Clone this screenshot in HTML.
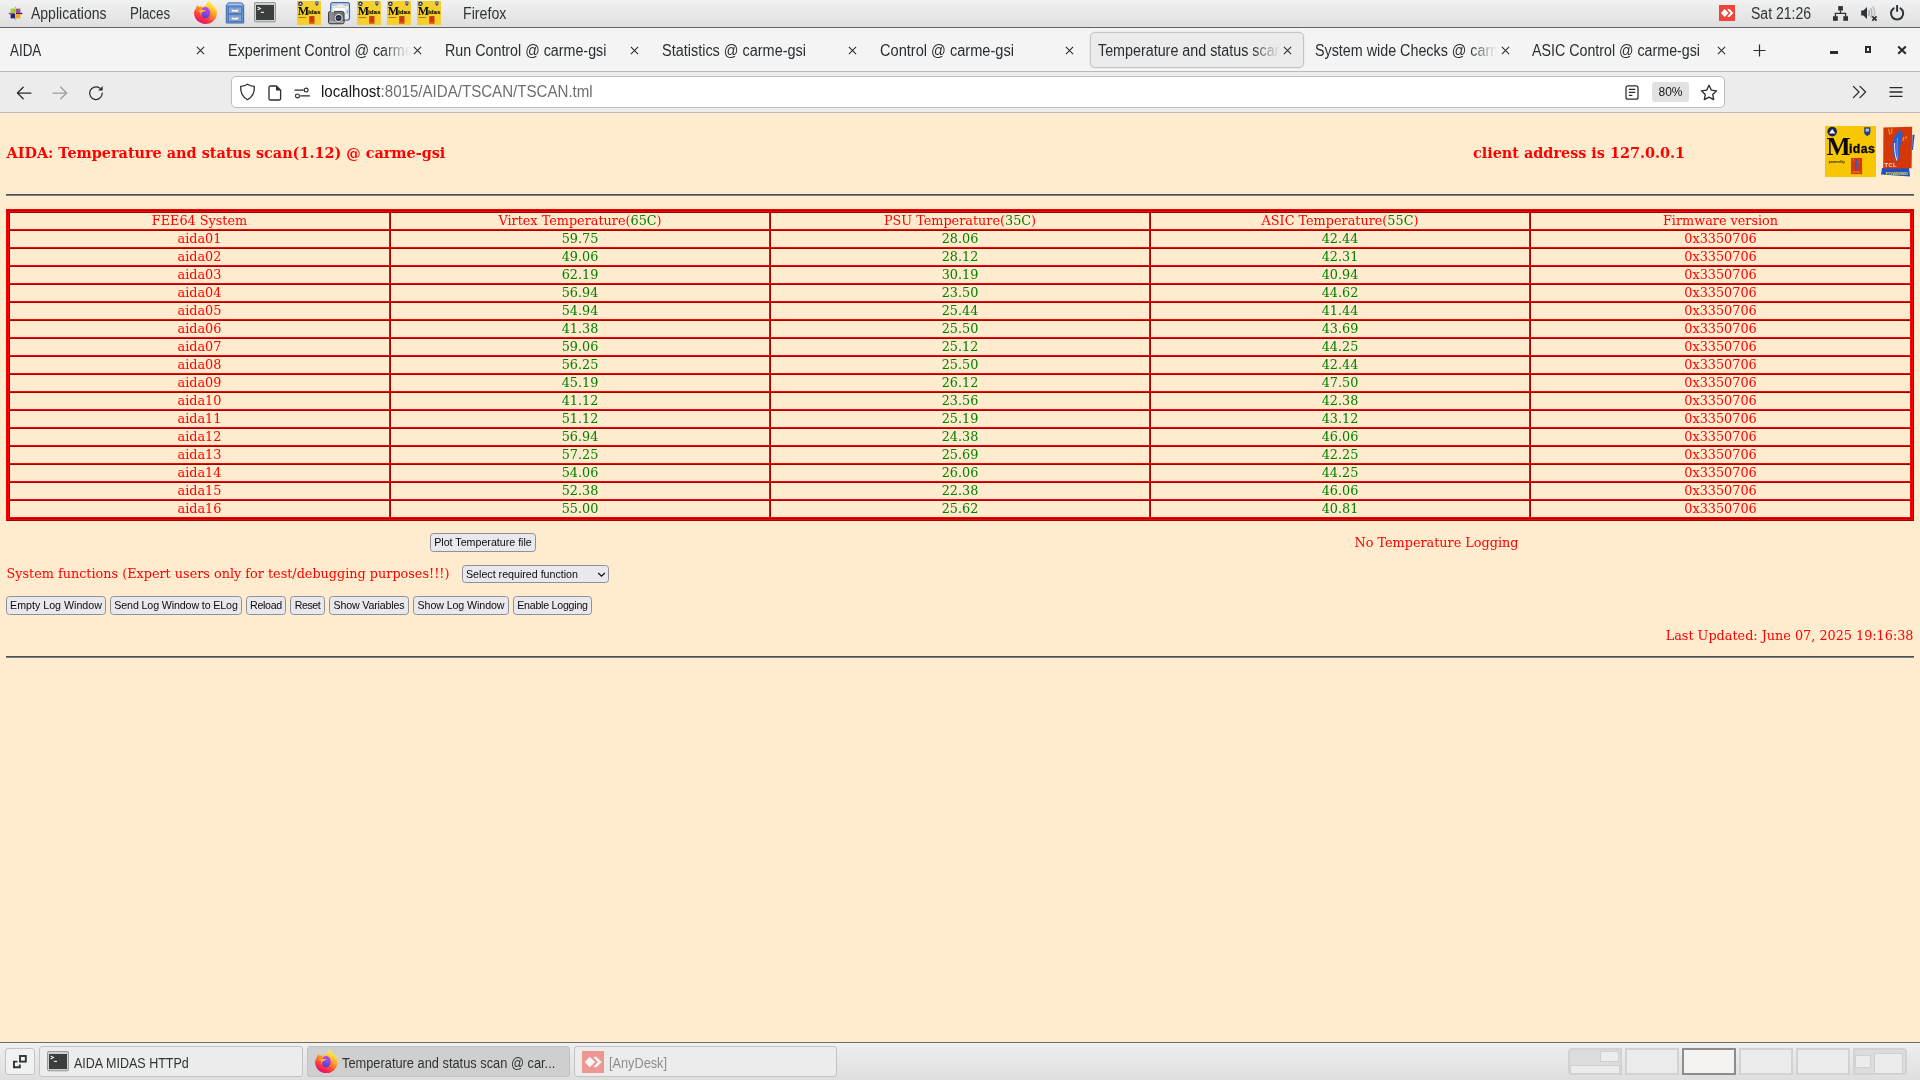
<!DOCTYPE html>
<html>
<head>
<meta charset="utf-8">
<title>Temperature and status scan @ carme-gsi</title>
<style>
html,body{margin:0;padding:0;}
body{width:1920px;height:1080px;position:relative;overflow:hidden;background:#ffebcd;font-family:"Liberation Sans",sans-serif;}
.abs{position:absolute;white-space:nowrap;}
#panel,#tabs,#nav,#page,#task{will-change:transform;}
/* ---------- GNOME top panel ---------- */
#panel{position:absolute;left:0;top:0;width:1920px;height:27px;background:linear-gradient(#f1f1f1,#dfdfdf);border-bottom:1px solid #636363;}
#panel .t{position:absolute;top:0;height:27px;line-height:28px;font-size:15.8px;color:#2e3436;white-space:nowrap;transform-origin:0 50%;}
/* ---------- Firefox tab bar ---------- */
#tabs{position:absolute;left:0;top:28px;width:1920px;height:43px;background:#f4f4f4;border-bottom:1px solid #b9b9b9;}
#tabs .tt{position:absolute;top:1px;height:43px;line-height:43px;font-size:15.8px;color:#2a2e31;white-space:nowrap;overflow:hidden;}
#tabs .tt span{display:inline-block;transform-origin:0 50%;}
#tabs .x{position:absolute;top:17.7px;width:9px;height:9px;}
#tabs .fade{-webkit-mask-image:linear-gradient(90deg,#000 0,#000 154px,transparent 182px);mask-image:linear-gradient(90deg,#000 0,#000 154px,transparent 182px);}
#acttab{position:absolute;left:1089.5px;top:3.5px;width:214px;height:36.5px;border:1px solid #c3c3c8;border-radius:5px;background:#ebebeb;box-sizing:border-box;box-shadow:0 0 2px rgba(0,0,0,.12);}
/* ---------- Firefox nav bar ---------- */
#nav{position:absolute;left:0;top:72px;width:1920px;height:40px;background:#ececec;border-bottom:1px solid #bcbcbc;}
#url{position:absolute;left:231px;top:4px;width:1494px;height:32px;box-sizing:border-box;border:1px solid #bebebe;border-radius:5px;background:#fff;}
/* ---------- page ---------- */
#page{position:absolute;left:0;top:113px;width:1920px;height:918px;background:#ffebcd;font-family:"DejaVu Serif","Liberation Serif",serif;font-size:12.8px;color:#f00;}
.hr{position:absolute;left:6px;width:1908px;height:2px;background:linear-gradient(#4c4d50 50%,#7f8083 50%);}
/* table */
#tA{position:absolute;left:6px;top:96px;width:1908px;height:312px;box-sizing:border-box;border:1px solid;border-color:#f00 #a80000 #a80000 #f00;}
#tB{box-sizing:border-box;width:1906px;height:310px;border:1px solid;border-color:#a80000 #f00 #f00 #a80000;}
#tC{box-sizing:border-box;width:1904px;height:308px;border:1px solid;border-color:#f00 #a80000 #a80000 #f00;}
#tt{border-collapse:separate;border-spacing:0;table-layout:fixed;width:1902px;height:306px;}
#tt td{box-sizing:border-box;height:18px;padding:0;border:1px solid;border-color:#a80000 #f00 #f00 #a80000;text-align:center;font-size:12.8px;line-height:16px;color:#f00;white-space:nowrap;overflow:hidden;}
.g{color:#008000 !important;}
/* form controls */
.btn{position:absolute;box-sizing:border-box;height:19px;border:1px solid #8f8f9d;border-radius:3.5px;background:#e9e9ed;color:#0c0c0d;font-family:"Liberation Sans",sans-serif;font-size:10.67px;line-height:17px;text-align:center;white-space:nowrap;overflow:hidden;}
#sel{position:absolute;left:462px;top:452px;width:147px;height:18px;box-sizing:border-box;border:1px solid #8f8f9d;border-radius:3.5px;background:#e9e9ed;color:#0c0c0d;font-family:"Liberation Sans",sans-serif;font-size:10.67px;line-height:16px;white-space:nowrap;padding-left:3px;}
/* ---------- bottom task bar ---------- */
#task{position:absolute;left:0;top:1042px;width:1920px;height:38px;background:linear-gradient(#efefef,#dedede);border-top:1px solid #6c6c6c;box-sizing:border-box;}
.tb{position:absolute;box-sizing:border-box;border:1px solid #c4c4c4;border-radius:3px;background:#ececec;}
.tb .tx{position:absolute;top:1px;height:29px;line-height:30px;font-size:14px;color:#2e3436;white-space:nowrap;transform-origin:0 50%;}
.ws{position:absolute;top:5px;height:27px;box-sizing:border-box;border:2px solid #d2d2d2;background:#ebebeb;}
.wn{position:absolute;box-sizing:border-box;border:1px solid #cfcfcf;background:#ececec;}
/*FIT*/
#pApp{transform:scaleX(0.8863);}
#pPla{transform:scaleX(0.8477);}
#pFfx{transform:scaleX(0.8989);}
#pClk{transform:scaleX(0.8885);}
#tb1{transform:scaleX(0.8488);}
#tb3{transform:scaleX(0.9044);}
#tb4{transform:scaleX(0.9150);}
#tb5{transform:scaleX(0.9235);}
#tb8{transform:scaleX(0.9016);}
#urltxt{transform:scaleX(0.9268);}
#tk1{transform:scaleX(0.8944);}
#tk2{transform:scaleX(0.9159);}
#tk3{transform:scaleX(0.9089);}
#tb2{transform:scaleX(0.9059);}
#tb6{transform:scaleX(0.9059);}
#tb7{transform:scaleX(0.9059);}
/*ENDFIT*/
</style>
</head>
<body>
<svg width="0" height="0" style="position:absolute">
  <defs>
    <linearGradient id="ffg1" x1="0.78" y1="0.05" x2="0.3" y2="1">
      <stop offset="0" stop-color="#fff44f"/><stop offset="0.22" stop-color="#ffd035"/><stop offset="0.45" stop-color="#ff8a2c"/><stop offset="0.7" stop-color="#ff4038"/><stop offset="0.9" stop-color="#f01866"/><stop offset="1" stop-color="#e00c86"/>
    </linearGradient>
    <linearGradient id="ffg2" x1="0.6" y1="0" x2="0.4" y2="1">
      <stop offset="0" stop-color="#b845fa"/><stop offset="0.5" stop-color="#8a48ee"/><stop offset="1" stop-color="#4a3fc6"/>
    </linearGradient>
    <linearGradient id="ffg3" x1="0" y1="0.5" x2="1" y2="0.5">
      <stop offset="0" stop-color="#ff9a26"/><stop offset="1" stop-color="#ffd32e"/>
    </linearGradient>
    <symbol id="ffx" viewBox="0 0 24 24">
      <path d="M15.3 0 C14.2 1.4 12.2 3.2 11.8 5.4 C10.6 5.2 9.2 5.6 8 6.6 C7.8 6 7.4 5.4 7 5 C6.4 5.6 5.6 6.2 5 6.2 C4.6 5.6 4.2 4.8 3.9 4.2 C3 5 2.2 6.6 1.8 8 C0.6 9.6 0.1 11 0.1 12.6 C0.1 19 5.4 24 12 24 C18.6 24 24 18.8 24 12.2 C24 10.4 23.6 9 22.8 7.8 C22.2 6.6 21.2 5.8 20.3 5.3 C19 3.6 17 1.6 15.3 0 Z" fill="url(#ffg1)"/>
      <ellipse cx="12" cy="12.2" rx="4.8" ry="5.9" fill="url(#ffg2)"/>
      <path d="M3 9.9 C5.4 8.8 9 8.7 12.1 9.7 C12.3 10.1 12 10.5 11.4 10.7 C10 10.7 8.6 11.4 7.9 12.6 C7.5 13.4 7.3 14.4 7.5 15.4 C6.7 14.2 6.5 12.8 6.9 11.5 C5.8 10.8 4.4 10.3 3 9.9 Z" fill="url(#ffg3)"/>
      <path d="M17 6.4 C19.6 8.6 20.8 12 19.8 15.4 C19 18 16.8 19.8 14.4 20.4 C17.6 20.6 20.8 18.4 21.8 15 C22.6 11.8 21 8.4 17 6.4 Z" fill="#ffb02a" opacity="0.5"/>
    </symbol>
    <symbol id="term" viewBox="0 0 22 21">
      <rect x="0.4" y="0.4" width="21.2" height="19.4" rx="1.6" fill="#cfd0ce" stroke="#8a8b89" stroke-width="0.9"/>
      <rect x="2" y="3" width="18" height="15" fill="#3a3e3d"/>
      <path d="M3.6 5 L6.4 6.5 L3.6 8" fill="none" stroke="#f2f2f2" stroke-width="1.1"/>
      <rect x="6.8" y="9.8" width="3.2" height="1.1" fill="#f2f2f2"/>
    </symbol>
    <symbol id="tcl" viewBox="0 0 34 51">
      <path d="M1 42 L28 42 L29 50.5 L0 48.5 Z" fill="#1f4fc0"/>
      <path d="M31.5 9 L33.6 8.6 L32 24 L31 24 Z" fill="#1f4fc0"/>
      <path d="M2.4 1.4 L31.2 0.8 L30.6 42.2 L2.2 42.6 Z" fill="#d43808"/>
      <path d="M19.7 4.5 C15 6 11.4 13 11.4 20 C11.4 27 14 33 16.2 37 C18 33 18.6 28 18.4 24 C19.4 20 20.6 15 21.4 11 C22 8 21.5 5.5 19.7 4.5 Z" fill="#2b5fd0"/>
      <path d="M13.6 17 C13.2 23 14.4 30 15.8 34.6" fill="none" stroke="#e9eefb" stroke-width="1"/>
      <path d="M16.6 12 C15.8 18 16 26 16.6 33" fill="none" stroke="#8fb0ee" stroke-width="0.7"/>
      <path d="M7.5 3 L9 9 M11 2.4 L10.6 8 M23 11 L21.6 15 M25.6 10.4 L24.6 13" stroke="#f2a218" stroke-width="1.1"/>
      <text x="3.4" y="40.8" font-family="Liberation Sans, sans-serif" font-weight="bold" font-size="5.6" fill="#f4e9e2" letter-spacing="0.6">TCL</text>
      <text x="5" y="48.6" font-family="Liberation Sans, sans-serif" font-weight="bold" font-size="4.3" fill="#f2e21c" letter-spacing="0">POWERED</text>
    </symbol>
    <symbol id="midas" viewBox="0 0 51 51">
      <rect x="0" y="0" width="51" height="51" style="fill:var(--my,#f7c704)"/>
      <circle cx="7.2" cy="5.6" r="4.8" fill="#14245e"/>
      <path d="M4 7.6 L7.2 3 L10.4 7.6 Z" fill="#f4f6fb"/>
      <path d="M39.2 1.2 H45.4 V6 Q45.4 8.8 42.3 10 Q39.2 8.8 39.2 6 Z" fill="#1c3f9c"/>
      <path d="M40.6 2.6 H44 V5.6 H40.6 Z" fill="#dfe6f5" opacity="0.75"/>
      <text x="1.6" y="28.8" font-family="Liberation Serif, serif" font-weight="bold" font-size="25.5" fill="#0a0a0a">M</text>
      <text x="24" y="26.6" font-family="Liberation Sans, sans-serif" font-weight="bold" font-size="12.3" fill="#0a0a0a" stroke="#0a0a0a" stroke-width="0.35" letter-spacing="0.45">idas</text>
      <text x="3.8" y="37" font-family="Liberation Sans, sans-serif" font-weight="bold" font-size="2.9" fill="#15130a">powered by</text>
      <g transform="translate(25.6,31.6) scale(0.36)">
        <rect x="1" y="1" width="31" height="45" fill="#d43808"/>
        <path d="M18.5 4 C14 6 11.5 14 12 24 C12.2 29 13 34 14.6 37 C17.6 31 18.2 26 17.6 21 C19 17 19.4 13 19 10 C19.8 8 20 6 18.5 4 Z" fill="#2b5fd0"/>
        <path d="M7.5 3 L9 9 M23 11 L21.6 15" stroke="#f2a218" stroke-width="1.4"/>
        <rect x="5" y="38" width="22" height="4" fill="#f06a3a"/>
      </g>
    </symbol>
    <symbol id="anyd" viewBox="0 0 16 16">
      <rect width="16" height="16" fill="#ef443b"/>
      <path d="M5.7 4.1 L9.5 8 L5.7 11.9 L1.9 8 Z" fill="#fff"/>
      <path d="M9.1 4.1 L10.5 4.1 L14.3 8 L10.5 11.9 L9.1 11.9 L8.4 11.2 L11.6 8 L8.4 4.8 Z" fill="#fff"/>
    </symbol>
  </defs>
</svg>

<div id="panel">
  <!-- centos-like logo -->
  <svg class="abs" style="left:8px;top:6px" width="15" height="15" viewBox="0 0 15 15">
    <rect x="2.6" y="2.6" width="4.4" height="4.4" fill="#9ccd2a"/>
    <rect x="8" y="2.6" width="4.4" height="4.4" fill="#a14f8c"/>
    <rect x="2.6" y="8" width="4.4" height="4.4" fill="#262577"/>
    <rect x="8" y="8" width="4.4" height="4.4" fill="#efa724"/>
    <path d="M7.5 0.4 L8.7 1.8 L7.9 1.8 L7.9 7 L7.1 7 L7.1 1.8 L6.3 1.8 Z" fill="#efa724"/>
    <path d="M14.6 7.5 L13.2 8.7 L13.2 7.9 L8 7.9 L8 7.1 L13.2 7.1 L13.2 6.3 Z" fill="#262577"/>
    <path d="M7.5 14.6 L6.3 13.2 L7.1 13.2 L7.1 8 L7.9 8 L7.9 13.2 L8.7 13.2 Z" fill="#9ccd2a"/>
    <path d="M0.4 7.5 L1.8 6.3 L1.8 7.1 L7 7.1 L7 7.9 L1.8 7.9 L1.8 8.7 Z" fill="#a14f8c"/>
  </svg>
  <div class="t" id="pApp" style="left:31px">Applications</div>
  <div class="t" id="pPla" style="left:130px">Places</div>
  <!-- firefox launcher -->
  <svg class="abs" style="left:193.5px;top:1px" width="23" height="23" viewBox="0 0 24 24"><use href="#ffx"/></svg>
  <!-- file cabinet -->
  <svg class="abs" style="left:225px;top:1.5px" width="20" height="22" viewBox="0 0 20 22">
    <path d="M1.3 3.4 L3.2 0.9 L16.8 0.9 L18.7 3.4 L18.7 21 L1.3 21 Z" fill="#6d96d3" stroke="#3c66a8" stroke-width="1"/>
    <path d="M2 3.2 L3.5 1.5 L16.5 1.5 L18 3.2 Z" fill="#a9c3ea"/>
    <rect x="2" y="3.6" width="16" height="16.8" fill="#6690d0"/>
    <rect x="3.4" y="5" width="13.2" height="6.6" fill="#86a9de" stroke="#3e69ac" stroke-width="0.7"/>
    <rect x="3.4" y="12.8" width="13.2" height="6.6" fill="#86a9de" stroke="#3e69ac" stroke-width="0.7"/>
    <path d="M6.2 6.6 H13.8 V9.6 Q13.8 10.2 13.2 10.2 H6.8 Q6.2 10.2 6.2 9.6 Z" fill="#f4f5f6" stroke="#6a7280" stroke-width="0.6"/>
    <rect x="7.4" y="6.4" width="5.2" height="1.6" fill="#7fa3da"/>
    <path d="M6.2 14.4 H13.8 V17.4 Q13.8 18 13.2 18 H6.8 Q6.2 18 6.2 17.4 Z" fill="#f4f5f6" stroke="#6a7280" stroke-width="0.6"/>
    <rect x="7.4" y="14.2" width="5.2" height="1.6" fill="#7fa3da"/>
  </svg>
  <!-- terminal -->
  <svg class="abs" style="left:254px;top:2px" width="22" height="21" viewBox="0 0 22 21"><use href="#term"/></svg>
  <!-- midas launchers -->
  <svg class="abs" style="left:297px;top:1px;--my:#f6cf2a" width="24" height="24" viewBox="0 0 51 51"><use href="#midas"/></svg>
  <!-- screenshot tool -->
  <svg class="abs" style="left:328px;top:2px" width="23" height="23" viewBox="0 0 23 23">
    <rect x="2.8" y="0.7" width="18.6" height="17.4" rx="2" fill="#fdfdfd" stroke="#3a69ad" stroke-width="1.4"/>
    <rect x="3.6" y="1.6" width="17" height="2.8" fill="#c6c8ca"/>
    <rect x="9.5" y="2.4" width="6" height="2.4" fill="#ececec"/>
    <rect x="4.4" y="5.6" width="13.4" height="11" fill="#ffffff" stroke="#c9cbcd" stroke-width="0.6"/>
    <rect x="18.6" y="5.6" width="1.6" height="11.4" fill="#e6e8ea"/>
    <rect x="18.7" y="8" width="1.4" height="3.6" fill="#7fb0ec"/>
    <rect x="0.5" y="9.4" width="15.6" height="12.4" rx="1.8" fill="#6d7073" stroke="#303234" stroke-width="0.9"/>
    <rect x="2.8" y="8.2" width="3.4" height="1.8" fill="#d9dadb"/>
    <rect x="1.2" y="10.2" width="4.6" height="10.8" fill="#8a8d90"/>
    <rect x="1.2" y="19" width="14.2" height="2" fill="#a9abae"/>
    <circle cx="10.6" cy="16" r="4.4" fill="#e8e9ea" stroke="#55585b" stroke-width="0.6"/>
    <circle cx="10.6" cy="16" r="3" fill="#2a2c2f"/>
    <rect x="8.6" y="14.8" width="3.6" height="2.2" fill="#1f4a9a"/>
    <circle cx="14.2" cy="20" r="0.8" fill="#f0a020"/>
  </svg>
  <svg class="abs" style="left:357px;top:1px;--my:#f6cf2a" width="24" height="24" viewBox="0 0 51 51"><use href="#midas"/></svg>
  <svg class="abs" style="left:387px;top:1px;--my:#f6cf2a" width="24" height="24" viewBox="0 0 51 51"><use href="#midas"/></svg>
  <svg class="abs" style="left:417px;top:1px;--my:#f6cf2a" width="24" height="24" viewBox="0 0 51 51"><use href="#midas"/></svg>
  <div class="t" id="pFfx" style="left:463px">Firefox</div>
  <!-- anydesk tray -->
  <svg class="abs" style="left:1719px;top:5px" width="16" height="16" viewBox="0 0 16 16"><use href="#anyd"/></svg>
  <div class="t" id="pClk" style="left:1751px">Sat 21:26</div>
  <!-- network -->
  <svg class="abs" style="left:1833px;top:6px" width="15" height="15" viewBox="0 0 15 15">
    <rect x="5.2" y="0.1" width="4.7" height="4.5" fill="#2e3436"/>
    <rect x="0" y="10.2" width="4.8" height="4.6" fill="#2e3436"/>
    <rect x="10.3" y="10.2" width="4.7" height="4.6" fill="#2e3436"/>
    <path d="M7.5 4.4 V7.4 M2.4 10.4 V7.4 H12.6 V10.4" fill="none" stroke="#2e3436" stroke-width="1.3"/>
  </svg>
  <!-- volume muted -->
  <svg class="abs" style="left:1861px;top:6px" width="17" height="16" viewBox="0 0 17 16">
    <path d="M0.2 4.4 H2.4 L6 0.9 V13.1 L2.4 9.6 H0.2 Z" fill="#2e3436"/>
    <path d="M7.6 4 Q9 7 7.6 10" fill="none" stroke="#a3a6a7" stroke-width="1.5"/>
    <path d="M9.6 2.2 Q11.9 7 9.6 11.8" fill="none" stroke="#afb2b3" stroke-width="1.5"/>
    <path d="M11.7 0.4 Q14.9 6.4 12.9 10" fill="none" stroke="#bcbebf" stroke-width="1.5"/>
    <path d="M11.3 10.3 L15.6 14.6 M15.6 10.3 L11.3 14.6" stroke="#2e3436" stroke-width="1.8"/>
  </svg>
  <!-- power -->
  <svg class="abs" style="left:1889px;top:5px" width="16" height="16" viewBox="0 0 16 16">
    <path d="M4.7 3.4 A6.1 6.1 0 1 0 11.5 3.4" fill="none" stroke="#2e3436" stroke-width="2" stroke-linecap="round"/>
    <path d="M8.1 0.9 V6" stroke="#2e3436" stroke-width="2" stroke-linecap="round"/>
  </svg>
</div>

<div id="tabs">
  <div id="acttab"></div>
  <div class="tt" style="left:10px;width:182px"><span id="tb1">AIDA</span></div>
  <svg class="x" style="left:195.5px" viewBox="0 0 9 9"><path d="M0.9 0.9 L8.1 8.1 M8.1 0.9 L0.9 8.1" stroke="#2b2b2b" stroke-width="1.05" fill="none"/></svg>
  <div class="tt fade" style="left:228px;width:182px"><span id="tb2">Experiment Control @ carme-gsi</span></div>
  <svg class="x" style="left:412.5px" viewBox="0 0 9 9"><path d="M0.9 0.9 L8.1 8.1 M8.1 0.9 L0.9 8.1" stroke="#2b2b2b" stroke-width="1.05" fill="none"/></svg>
  <div class="tt" style="left:445px;width:182px"><span id="tb3">Run Control @ carme-gsi</span></div>
  <svg class="x" style="left:629.5px" viewBox="0 0 9 9"><path d="M0.9 0.9 L8.1 8.1 M8.1 0.9 L0.9 8.1" stroke="#2b2b2b" stroke-width="1.05" fill="none"/></svg>
  <div class="tt" style="left:662px;width:182px"><span id="tb4">Statistics @ carme-gsi</span></div>
  <svg class="x" style="left:847.5px" viewBox="0 0 9 9"><path d="M0.9 0.9 L8.1 8.1 M8.1 0.9 L0.9 8.1" stroke="#2b2b2b" stroke-width="1.05" fill="none"/></svg>
  <div class="tt" style="left:880px;width:182px"><span id="tb5">Control @ carme-gsi</span></div>
  <svg class="x" style="left:1064.5px" viewBox="0 0 9 9"><path d="M0.9 0.9 L8.1 8.1 M8.1 0.9 L0.9 8.1" stroke="#2b2b2b" stroke-width="1.05" fill="none"/></svg>
  <div class="tt fade" style="left:1098px;width:182px"><span id="tb6">Temperature and status scan @ carme-gsi</span></div>
  <svg class="x" style="left:1282.5px" viewBox="0 0 9 9"><path d="M0.9 0.9 L8.1 8.1 M8.1 0.9 L0.9 8.1" stroke="#2b2b2b" stroke-width="1.05" fill="none"/></svg>
  <div class="tt fade" style="left:1315px;width:182px"><span id="tb7">System wide Checks @ carme-gsi</span></div>
  <svg class="x" style="left:1500.5px" viewBox="0 0 9 9"><path d="M0.9 0.9 L8.1 8.1 M8.1 0.9 L0.9 8.1" stroke="#2b2b2b" stroke-width="1.05" fill="none"/></svg>
  <div class="tt" style="left:1532px;width:182px"><span id="tb8">ASIC Control @ carme-gsi</span></div>
  <svg class="x" style="left:1716.5px" viewBox="0 0 9 9"><path d="M0.9 0.9 L8.1 8.1 M8.1 0.9 L0.9 8.1" stroke="#2b2b2b" stroke-width="1.05" fill="none"/></svg>
  <svg class="abs" style="left:1753px;top:16px" width="13" height="13" viewBox="0 0 13 13"><path d="M6.5 0.5 V12.5 M0.5 6.5 H12.5" stroke="#2b2b2b" stroke-width="1.2" fill="none"/></svg>
  <div class="abs" style="left:1830px;top:23px;width:8px;height:2.6px;background:#2b2b2b"></div>
  <div class="abs" style="left:1864.5px;top:18.2px;width:6.8px;height:6.8px;box-sizing:border-box;border:2px solid #2b2b2b"></div>
  <svg class="abs" style="left:1897px;top:17px" width="10" height="10" viewBox="0 0 10 10"><path d="M1.2 1.4 L8.8 8.8 M8.8 1.4 L1.2 8.8" stroke="#2b2b2b" stroke-width="2.1" fill="none"/></svg>
</div>

<div id="nav">
  <svg class="abs" style="left:16px;top:14px" width="16" height="14" viewBox="0 0 16 14"><path d="M15 7 H1.6 M7.2 1.2 L1.4 7 L7.2 12.8" fill="none" stroke="#2b2b2b" stroke-width="1.25" stroke-linecap="round" stroke-linejoin="round"/></svg>
  <svg class="abs" style="left:52px;top:14px" width="16" height="14" viewBox="0 0 16 14"><path d="M1 7 H14.4 M8.8 1.2 L14.6 7 L8.8 12.8" fill="none" stroke="#9a9a9a" stroke-width="1.25" stroke-linecap="round" stroke-linejoin="round"/></svg>
  <svg class="abs" style="left:88px;top:13px" width="16" height="16" viewBox="0 0 16 16"><path d="M14.2 8.2 A6.3 6.3 0 1 1 11.6 3.1" fill="none" stroke="#2b2b2b" stroke-width="1.25" stroke-linecap="round"/><path d="M14.6 1 V5.4 H10.2 Z" fill="#2b2b2b"/></svg>
  <div id="url">
    <svg class="abs" style="left:7px;top:6px" width="17" height="18" viewBox="0 0 17 18"><path d="M8.5 1.2 C10.6 2.6 13 3.2 15.3 3.4 C15.6 9.4 13.6 14 8.5 16.8 C3.4 14 1.4 9.4 1.7 3.4 C4 3.2 6.4 2.6 8.5 1.2 Z" fill="none" stroke="#2b2b2b" stroke-width="1.3" stroke-linejoin="round"/></svg>
    <svg class="abs" style="left:36px;top:7.5px" width="14" height="16" viewBox="0 0 14 16"><path d="M2.6 1 H8.4 L12.6 5.2 V13.4 Q12.6 15 11 15 H2.6 Q1 15 1 13.4 V2.6 Q1 1 2.6 1 Z" fill="none" stroke="#2b2b2b" stroke-width="1.3" stroke-linejoin="round"/><path d="M8 1.2 L12.4 5.6 H8 Z" fill="#2b2b2b"/></svg>
    <svg class="abs" style="left:62.3px;top:10px" width="16.4" height="12" viewBox="0 0 17 12"><path d="M1 3 H9.6 M7 9 H16" fill="none" stroke="#2b2b2b" stroke-width="1.25" stroke-linecap="round"/><circle cx="12.6" cy="3" r="2" fill="none" stroke="#2b2b2b" stroke-width="1.2"/><circle cx="3.6" cy="9" r="2" fill="none" stroke="#2b2b2b" stroke-width="1.2"/></svg>
    <div class="abs" id="urltxt" style="left:89px;top:-0.7px;height:30px;line-height:30px;font-size:16.3px;color:#151515;transform-origin:0 50%"><span>localhost</span><span style="color:#6e6e6e">:8015/AIDA/TSCAN/TSCAN.tml</span></div>
    <svg class="abs" style="left:1393px;top:8px" width="14" height="15" viewBox="0 0 14 15"><rect x="1" y="0.8" width="12" height="13.4" rx="2" fill="none" stroke="#2b2b2b" stroke-width="1.25"/><path d="M3.8 4.4 H10.2 M3.8 7.4 H10.2 M3.8 10.4 H7.4" stroke="#2b2b2b" stroke-width="1.2" fill="none"/></svg>
    <div class="abs" style="left:1420px;top:5px;width:37px;height:20px;border-radius:3px;background:#e1e1e1;text-align:center;line-height:21px;font-size:12px;color:#151515;">80%</div>
    <svg class="abs" style="left:1468px;top:7px" width="18" height="17" viewBox="0 0 18 17"><path d="M9 1.3 L11.3 6.1 L16.6 6.8 L12.7 10.4 L13.7 15.6 L9 13.1 L4.3 15.6 L5.3 10.4 L1.4 6.8 L6.7 6.1 Z" fill="none" stroke="#2b2b2b" stroke-width="1.3" stroke-linejoin="round"/></svg>
  </div>
  <svg class="abs" style="left:1852px;top:13px" width="15" height="14" viewBox="0 0 15 14"><path d="M1.4 1.4 L7 7 L1.4 12.6 M8 1.4 L13.6 7 L8 12.6" fill="none" stroke="#2b2b2b" stroke-width="1.3" stroke-linecap="round" stroke-linejoin="round"/></svg>
  <svg class="abs" style="left:1889px;top:14px" width="14" height="12" viewBox="0 0 14 12"><path d="M1 1.6 H13 M1 6 H13 M1 10.4 H13" stroke="#2b2b2b" stroke-width="1.3" fill="none" stroke-linecap="round"/></svg>
</div>

<div id="page">
  <div class="abs" id="h1" style="left:6.5px;top:31px;font-weight:bold;font-size:14.4px;">AIDA: Temperature and status scan(1.12) @ carme-gsi</div>
  <div class="abs" id="h2" style="left:1473px;top:31px;font-weight:bold;font-size:14.4px;">client address is 127.0.0.1</div>
  <svg class="abs" style="left:1825px;top:13px" width="51" height="51" viewBox="0 0 51 51"><use href="#midas"/></svg>
  <svg class="abs" style="left:1880.5px;top:13px" width="34" height="51" viewBox="0 0 34 51"><use href="#tcl"/></svg>
  <div class="hr" style="top:81px"></div>
<div id="tA"><div id="tB"><div id="tC"><table id="tt" cellspacing="0" cellpadding="0">
<colgroup><col style="width:381px"><col style="width:380px"><col style="width:380px"><col style="width:380px"><col style="width:381px"></colgroup>
<tr><td>FEE64 System</td><td>Virtex Temperature(<span class="g">65C</span>)</td><td>PSU Temperature(<span class="g">35C</span>)</td><td>ASIC Temperature(<span class="g">55C</span>)</td><td>Firmware version</td></tr>
<tr><td>aida01</td><td class="g">59.75</td><td class="g">28.06</td><td class="g">42.44</td><td>0x3350706</td></tr>
<tr><td>aida02</td><td class="g">49.06</td><td class="g">28.12</td><td class="g">42.31</td><td>0x3350706</td></tr>
<tr><td>aida03</td><td class="g">62.19</td><td class="g">30.19</td><td class="g">40.94</td><td>0x3350706</td></tr>
<tr><td>aida04</td><td class="g">56.94</td><td class="g">23.50</td><td class="g">44.62</td><td>0x3350706</td></tr>
<tr><td>aida05</td><td class="g">54.94</td><td class="g">25.44</td><td class="g">41.44</td><td>0x3350706</td></tr>
<tr><td>aida06</td><td class="g">41.38</td><td class="g">25.50</td><td class="g">43.69</td><td>0x3350706</td></tr>
<tr><td>aida07</td><td class="g">59.06</td><td class="g">25.12</td><td class="g">44.25</td><td>0x3350706</td></tr>
<tr><td>aida08</td><td class="g">56.25</td><td class="g">25.50</td><td class="g">42.44</td><td>0x3350706</td></tr>
<tr><td>aida09</td><td class="g">45.19</td><td class="g">26.12</td><td class="g">47.50</td><td>0x3350706</td></tr>
<tr><td>aida10</td><td class="g">41.12</td><td class="g">23.56</td><td class="g">42.38</td><td>0x3350706</td></tr>
<tr><td>aida11</td><td class="g">51.12</td><td class="g">25.19</td><td class="g">43.12</td><td>0x3350706</td></tr>
<tr><td>aida12</td><td class="g">56.94</td><td class="g">24.38</td><td class="g">46.06</td><td>0x3350706</td></tr>
<tr><td>aida13</td><td class="g">57.25</td><td class="g">25.69</td><td class="g">42.25</td><td>0x3350706</td></tr>
<tr><td>aida14</td><td class="g">54.06</td><td class="g">26.06</td><td class="g">44.25</td><td>0x3350706</td></tr>
<tr><td>aida15</td><td class="g">52.38</td><td class="g">22.38</td><td class="g">46.06</td><td>0x3350706</td></tr>
<tr><td>aida16</td><td class="g">55.00</td><td class="g">25.62</td><td class="g">40.81</td><td>0x3350706</td></tr>
</table></div></div></div>
  <div class="btn" style="left:430px;top:420px;width:106px">Plot Temperature file</div>
  <div class="abs" style="left:1354.5px;top:422px;">No Temperature Logging</div>
  <div class="abs" style="left:6.5px;top:453px;">System functions (Expert users only for test/debugging purposes!!!)</div>
  <div id="sel">Select required function<svg style="position:absolute;left:134px;top:6px" width="9" height="6" viewBox="0 0 9 6"><path d="M1.2 1 L4.5 4.2 L7.8 1" fill="none" stroke="#0c0c0d" stroke-width="1.2"/></svg></div>
  <div class="btn" style="left:6px;top:483px;width:100px">Empty Log Window</div>
  <div class="btn" style="left:110px;top:483px;width:132px;letter-spacing:-0.12px">Send Log Window to ELog</div>
  <div class="btn" style="left:246px;top:483px;width:40px;letter-spacing:-0.33px">Reload</div>
  <div class="btn" style="left:290px;top:483px;width:35px;letter-spacing:-0.45px">Reset</div>
  <div class="btn" style="left:329px;top:483px;width:80px;letter-spacing:-0.17px">Show Variables</div>
  <div class="btn" style="left:413px;top:483px;width:96px;letter-spacing:-0.09px">Show Log Window</div>
  <div class="btn" style="left:513px;top:483px;width:79px;letter-spacing:-0.25px">Enable Logging</div>
  <div class="abs" style="right:6.5px;top:515px;">Last Updated: June 07, 2025 19:16:38</div>
  <div class="hr" style="top:543px"></div>
</div>

<div id="task">
  <div class="tb" style="left:5px;top:5px;width:30px;height:27px;background:#f1f1f1">
    <svg class="abs" style="left:7px;top:6.2px" width="14" height="14" viewBox="0 0 14 14"><rect x="7" y="1" width="5.8" height="5.6" fill="#f6f6f6" stroke="#2e3436" stroke-width="1.9"/><path d="M4.4 6.6 H0.95 V12.2 H6.8 V9.4" fill="none" stroke="#2e3436" stroke-width="1.9"/></svg>
  </div>
  <div class="tb" style="left:39px;top:3px;width:264px;height:31px;">
    <svg class="abs" style="left:7px;top:4px" width="22" height="21" viewBox="0 0 22 21"><use href="#term"/></svg>
    <div class="tx" id="tk1" style="left:34px">AIDA MIDAS HTTPd</div>
  </div>
  <div class="tb" style="left:307px;top:3px;width:263px;height:31px;background:#cfcfcf;border-color:#c2c2c2">
    <svg class="abs" style="left:6.6px;top:2.8px" width="22.5" height="23.2" viewBox="0 0 24 24" preserveAspectRatio="none"><use href="#ffx"/></svg>
    <div class="tx" id="tk2" style="left:34px">Temperature and status scan @ car...</div>
  </div>
  <div class="tb" style="left:574px;top:3px;width:263px;height:31px;">
    <svg class="abs" style="left:7px;top:4px;opacity:0.5" width="22" height="22" viewBox="0 0 16 16"><use href="#anyd"/></svg>
    <div class="tx" id="tk3" style="left:34px;color:#8b8e8f">[AnyDesk]</div>
  </div>
  <!-- workspace switcher -->
  <div class="ws" style="left:1568px;width:54px;background:#dcdcdc;border-radius:4px 0 0 4px"><div class="wn" style="left:29.5px;top:1px;width:19px;height:11px"></div><div class="wn" style="left:0px;top:14.5px;width:50px;height:9.5px"></div></div>
  <div class="ws" style="left:1625px;width:54px"></div>
  <div class="ws" style="left:1682px;width:54px;border-color:#8c8c8c;background:#f4f3f2"></div>
  <div class="ws" style="left:1739px;width:54px"></div>
  <div class="ws" style="left:1796px;width:54px"></div>
  <div class="ws" style="left:1853px;width:54px;background:#dcdcdc;border-radius:0 4px 4px 0"><div class="wn" style="left:0px;top:4.5px;width:16px;height:13px"></div><div class="wn" style="left:18.5px;top:2.5px;width:29.5px;height:21px"></div></div>
</div>

</body>
</html>
